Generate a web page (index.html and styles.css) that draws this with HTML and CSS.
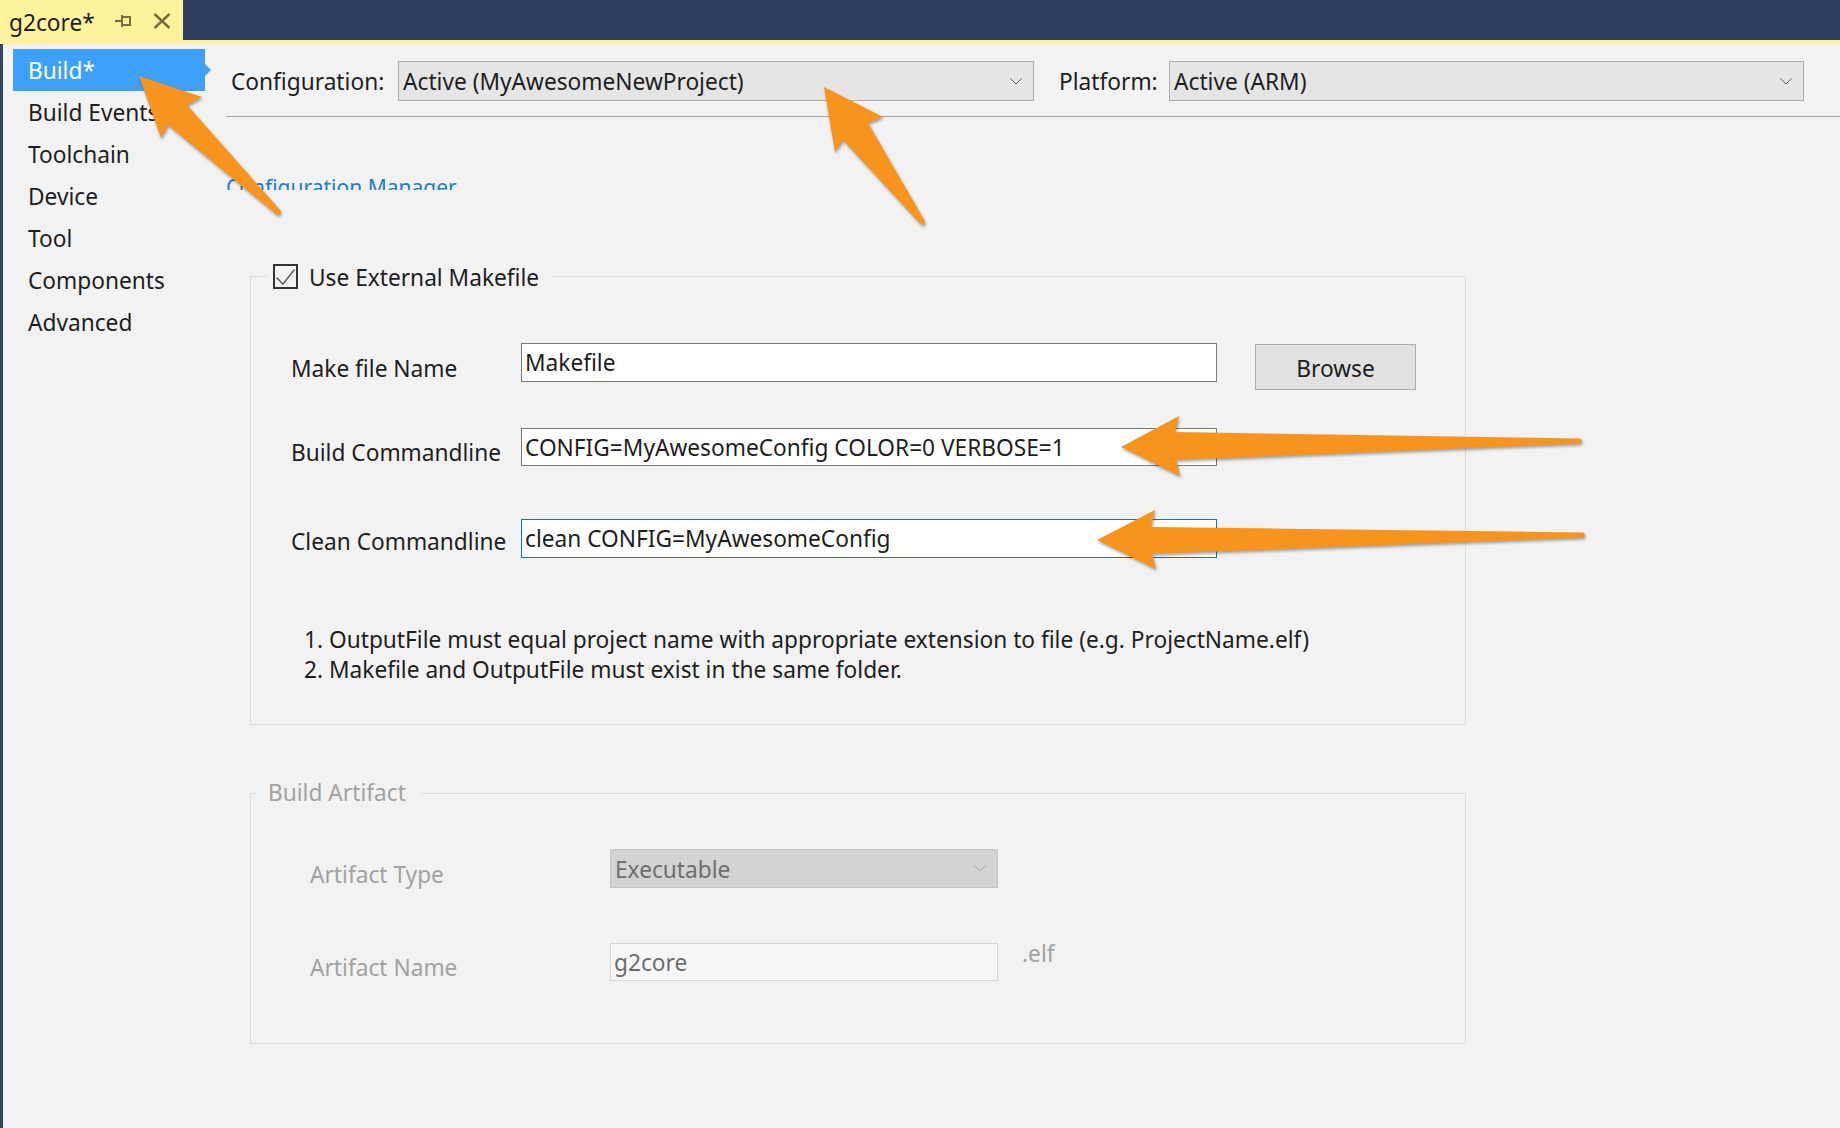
FILE: index.html
```html
<!DOCTYPE html>
<html>
<head>
<meta charset="utf-8">
<title>g2core - Build</title>
<link rel="stylesheet" href="styles.css">
</head>
<body>
<div class="app">
  <header class="titlebar">
    <div class="doc-tab">
      <span class="doc-title">g2core*</span>
      <svg class="tab-icon pin-icon" width="18" height="16" viewBox="0 0 18 16">
        <line x1="1" y1="8" x2="8" y2="8" stroke="#7a6a3c" stroke-width="2.2"/>
        <line x1="8" y1="2" x2="8" y2="14" stroke="#7a6a3c" stroke-width="2"/>
        <rect x="8" y="4" width="8" height="8" fill="none" stroke="#7a6a3c" stroke-width="2"/>
      </svg>
      <svg class="tab-icon close-icon" width="18" height="16" viewBox="0 0 18 16">
        <path d="M1.5 1 L16.5 15 M16.5 1 L1.5 15" stroke="#7a6a3c" stroke-width="2.4" fill="none"/>
      </svg>
    </div>
  </header>
  <div class="tab-accent"></div>
  <div class="workspace">
    <nav class="sidenav">
      <div class="nav-item selected">Build*</div>
      <div class="nav-item">Build Events</div>
      <div class="nav-item">Toolchain</div>
      <div class="nav-item">Device</div>
      <div class="nav-item">Tool</div>
      <div class="nav-item">Components</div>
      <div class="nav-item">Advanced</div>
    </nav>
    <main class="content">
      <div class="toprow">
        <span class="top-label cfg-label">Configuration:</span>
        <div class="combo cfg-combo">
          <span>Active (MyAwesomeNewProject)</span>
          <svg class="chevron" width="12" height="7" viewBox="0 0 12 7"><polyline points="0.5,0.5 6,6 11.5,0.5" fill="none" stroke="#5a5a5a" stroke-width="1"/></svg>
        </div>
        <span class="top-label plat-label">Platform:</span>
        <div class="combo plat-combo">
          <span>Active (ARM)</span>
          <svg class="chevron" width="12" height="7" viewBox="0 0 12 7"><polyline points="0.5,0.5 6,6 11.5,0.5" fill="none" stroke="#5a5a5a" stroke-width="1"/></svg>
        </div>
      </div>
      <div class="separator"></div>
      <div class="cfgmgr-clip"><a class="cfgmgr">Configuration Manager</a></div>

      <fieldset class="group makefile-group">
        <legend class="check-legend">
          <span class="legend-inner">
            <span class="checkbox">
              <svg width="21" height="21" viewBox="0 0 21 21"><polyline points="1.5,11.5 8,18 19.5,3.5" fill="none" stroke="#666" stroke-width="1.6"/></svg>
            </span>
            <span class="legend-text">Use External Makefile</span>
          </span>
        </legend>
        <div class="group-body makefile-body">
          <div class="form-row row-1">
            <span class="field-label">Make file Name</span>
            <div class="textbox">Makefile</div>
            <button class="btn">Browse</button>
          </div>
          <div class="form-row row-2">
            <span class="field-label">Build Commandline</span>
            <div class="textbox">CONFIG=MyAwesomeConfig COLOR=0 VERBOSE=1</div>
          </div>
          <div class="form-row row-3">
            <span class="field-label">Clean Commandline</span>
            <div class="textbox focused">clean CONFIG=MyAwesomeConfig</div>
          </div>
          <ol class="notes">
            <li>OutputFile must equal project name with appropriate extension to file (e.g. ProjectName.elf)</li>
            <li>Makefile and OutputFile must exist in the same folder.</li>
          </ol>
        </div>
      </fieldset>

      <fieldset class="group artifact-group">
        <legend class="text-legend">Build Artifact</legend>
        <div class="group-body artifact-body">
          <div class="form-row art-row-1">
            <span class="field-label">Artifact Type</span>
            <div class="combo disabled-combo">
              <span>Executable</span>
              <svg class="chevron" width="12" height="7" viewBox="0 0 12 7"><polyline points="0.5,0.5 6,6 11.5,0.5" fill="none" stroke="#a8a8a8" stroke-width="1"/></svg>
            </div>
          </div>
          <div class="form-row art-row-2">
            <span class="field-label">Artifact Name</span>
            <div class="textbox disabled-box">g2core</div>
            <span class="ext">.elf</span>
          </div>
        </div>
      </fieldset>
    </main>
  </div>

  <svg class="annotations" width="1840" height="1128" viewBox="0 0 1840 1128">
    <g fill="#f7941e">
      <path d="M139 76 L202 97 L187 105 L280 210 A2.8 2.8 0 0 1 276 214 L168 125 L161 138 Z"/>
      <path d="M824 87 L883 117 L868 123 L925 221.5 A2.8 2.8 0 0 1 921 224.5 L843 140 L835 152 Z"/>
      <path d="M1121 447 L1179 416 L1175 432 L1580 438.5 A2.6 2.6 0 0 1 1580 443.5 L1176 460 L1180 476 Z"/>
      <path d="M1097 540 L1155 510 L1151 527 L1583 532.5 A2.6 2.6 0 0 1 1583 537.5 L1152 554 L1156 569 Z"/>
    </g>
  </svg>
</div>
</body>
</html>
```

FILE: styles.css
```css
* { box-sizing: border-box; }
html, body { margin: 0; padding: 0; }
body {
  width: 1840px;
  height: 1128px;
  overflow: hidden;
  background: #f2f2f2;
  font-family: "Noto Sans", "Open Sans", sans-serif;
  font-size: 22.7px;
  color: #1e1e1e;
}
.app {
  position: relative;
  width: 1840px;
  height: 1128px;
  display: flex;
  flex-direction: column;
}

/* title / document tab */
.titlebar {
  height: 40px;
  flex: none;
  background: #2d3e5e;
  display: flex;
}
.doc-tab {
  width: 183px;
  background: #fff29d;
  display: flex;
  align-items: center;
  padding-left: 9px;
}
.doc-title { line-height: 30px; margin-top: 6px; color: #1e1e1e; }
.pin-icon { margin-left: 19px; margin-top: 2px; }
.close-icon { margin-left: 21px; margin-top: 2px; }
.tab-accent { height: 4px; flex: none; background: #fff29d; }

/* workspace */
.workspace {
  flex: 1;
  display: flex;
  border-left: 3px solid #34456a;
}
.sidenav {
  width: 223px;
  flex: none;
  padding: 5px 0 0 10px;
}
.nav-item {
  width: 192px;
  height: 42px;
  line-height: 44px;
  padding-left: 15px;
  position: relative;
  white-space: nowrap;
}
.nav-item.selected { background: #3ea0fb; color: #fff; }
.nav-item.selected::after {
  content: "";
  position: absolute;
  left: 100%;
  top: 15px;
  border-left: 6px solid #3ea0fb;
  border-top: 6px solid transparent;
  border-bottom: 6px solid transparent;
}

.content { flex: 1; }
.toprow {
  display: flex;
  align-items: center;
  height: 40px;
  margin-top: 17px;
  padding-left: 5px;
}
.top-label { line-height: 30px; padding-top: 2px; white-space: nowrap; }
.cfg-label { width: 167px; }
.plat-label { width: 110px; margin-left: 25px; }
.combo {
  height: 40px;
  background: #e5e5e5;
  border: 1px solid #acacac;
  display: flex;
  align-items: center;
  justify-content: space-between;
  padding: 0 11px 0 4px;
  line-height: 30px;
  white-space: nowrap;
}
.combo span { padding-top: 2px; }
.cfg-combo { width: 636px; }
.plat-combo { width: 635px; }
.chevron { flex: none; }

.separator { height: 1px; background: #a3a3a3; margin-top: 15px; }
.cfgmgr-clip {
  margin-top: 55px;
  height: 18px;
  overflow: hidden;
}
.cfgmgr { display: block; font-size: 21px; line-height: 30px; color: #1e7bcf; white-space: nowrap; }

/* group boxes */
.group {
  margin: 0 0 0 24px;
  padding: 0;
  width: 1216px;
  min-width: 0;
  border: 1px solid #dcdcdc;
}
.makefile-group { margin-top: 74px; }
.check-legend {
  margin-left: 16px;
  padding: 0 12px 0 6px;
}
.legend-inner { display: flex; align-items: center; height: 25px; }
.checkbox {
  width: 25px;
  height: 25px;
  border: 2px solid #333;
  flex: none;
  display: block;
}
.checkbox svg { display: block; }
.legend-text { margin-left: 11px; line-height: 25px; padding-top: 2px; white-space: nowrap; }

.group-body { display: flex; flex-direction: column; }
.makefile-body { padding: 54px 0 39px 40px; }

.form-row { display: flex; align-items: flex-start; }
.field-label { line-height: 30px; white-space: nowrap; flex: none; }
.makefile-body .field-label { width: 230px; }
.textbox {
  background: #fff;
  border: 1px solid #7a7a7a;
  padding: 1px 3px 0;
  display: flex;
  align-items: center;
  line-height: 30px;
  white-space: nowrap;
  overflow: hidden;
}
.makefile-body .textbox { width: 696px; }
.textbox.focused { border-color: #0078d7; }
.row-1 { height: 47px; }
.row-1 .field-label { margin-top: 11px; }
.row-1 .textbox { height: 39px; }
.btn {
  margin: 1px 0 0 38px;
  width: 161px;
  height: 46px;
  background: #e1e1e1;
  border: 1px solid #adadad;
  font: inherit;
  color: #1e1e1e;
  padding: 2px 0 0;
}
.row-2 { margin-top: 38px; height: 38px; }
.row-2 .field-label { margin-top: 10px; }
.row-2 .textbox { height: 38px; }
.row-3 { margin-top: 53px; height: 39px; }
.row-3 .field-label { margin-top: 8px; }
.row-3 .textbox { height: 39px; }
.notes {
  margin: 67px 0 0 0;
  padding: 0 0 0 13px;
  list-style: decimal inside;
  line-height: 30px;
}

.artifact-group { margin-top: 53px; }
.text-legend {
  margin-left: 5px;
  padding: 0 15px 0 12px;
  line-height: 30px;
  color: #a2a2a2;
}
.artifact-body { padding: 41px 0 62px 59px; }
.artifact-body .field-label { width: 300px; color: #a2a2a2; }
.art-row-1 { height: 39px; }
.art-row-1 .field-label { margin-top: 11px; }
.disabled-combo {
  width: 388px;
  height: 39px;
  background: #d3d3d3;
  border-color: #c6c6c6;
  color: #6d6d6d;
}
.art-row-2 { margin-top: 55px; height: 38px; }
.art-row-2 .field-label { margin-top: 10px; }
.disabled-box {
  width: 388px;
  height: 38px;
  background: #f6f6f6;
  border-color: #d6d6d6;
  color: #6d6d6d;
}
.ext { margin: -4px 0 0 24px; line-height: 30px; color: #a2a2a2; }

/* annotation overlay */
.annotations {
  position: absolute;
  left: 0;
  top: 0;
  pointer-events: none;
  filter: drop-shadow(1px 2px 1.5px rgba(0, 0, 0, 0.35));
}
```
